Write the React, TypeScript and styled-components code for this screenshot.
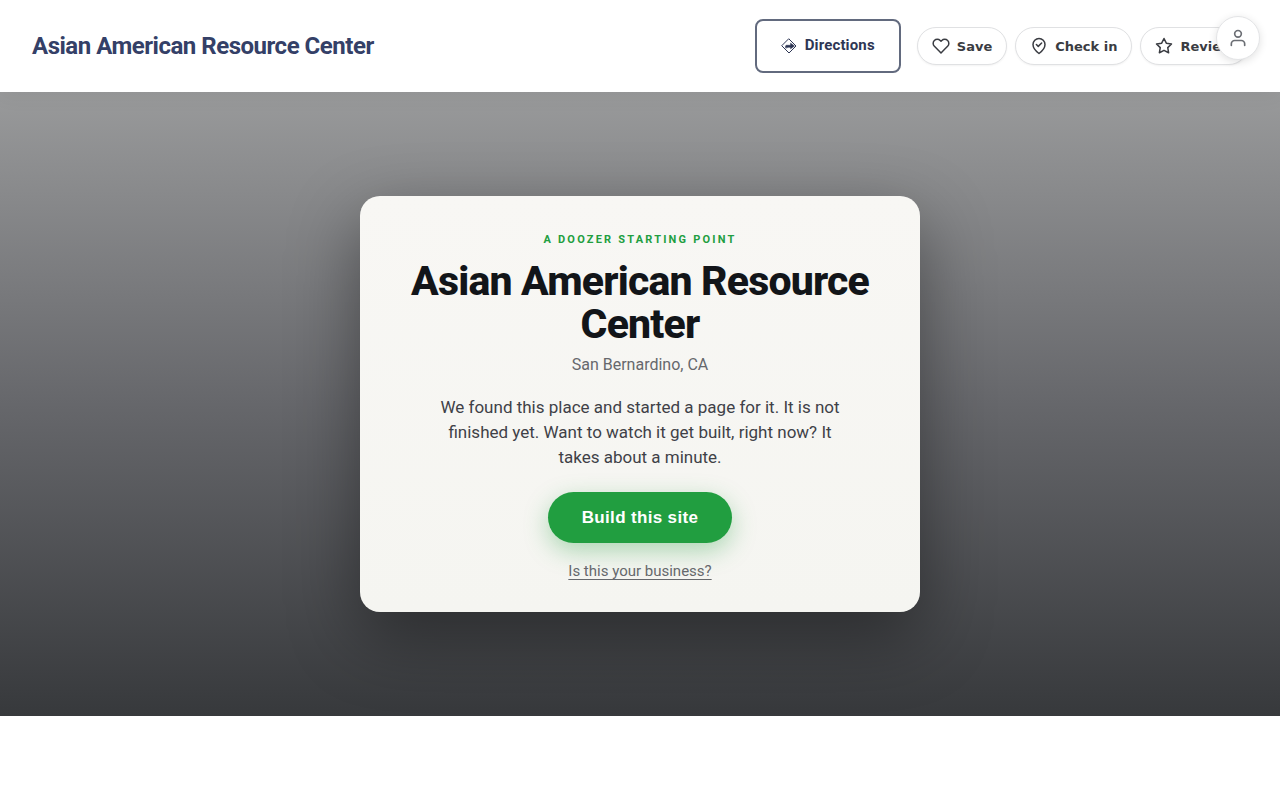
import React from "react";
import styled, { createGlobalStyle } from "styled-components";

const GlobalStyle = createGlobalStyle`
  *, *::before, *::after { box-sizing: border-box; }
  body {
    margin: 0;
    background: #fff;
    color: #3b3d42;
    font-family: Roboto, "Liberation Sans", sans-serif;
  }
`;

const Header = styled.header`
  position: relative;
  z-index: 1;
  display: flex;
  align-items: center;
  justify-content: space-between;
  min-height: 92px;
  padding: 0 32px;
  background: #fff;
  box-shadow: 0 4px 20px rgba(0, 0, 0, 0.05);
`;

const Brand = styled.a`
  color: #344067;
  font-size: 24px;
  font-weight: 700;
  line-height: 32px;
  letter-spacing: -0.02em;
  text-decoration: none;
`;

const Actions = styled.nav`
  display: flex;
  align-items: center;
  gap: 16px;
`;

const DirectionsLink = styled.a`
  display: flex;
  align-items: center;
  gap: 8px;
  height: 54px;
  padding: 0 24px;
  border: 2px solid #626a7e;
  border-radius: 8px;
  color: #2e3654;
  font-size: 15px;
  font-weight: 700;
  line-height: 24px;
  letter-spacing: 0.01em;
  text-decoration: none;
`;

const DirectionsLabel = styled.span`
  padding-bottom: 2px;
`;

const PillGroup = styled.div`
  display: flex;
  gap: 8px;
`;

const Pill = styled.button`
  display: flex;
  align-items: center;
  gap: 7px;
  height: 38px;
  padding: 0 14px;
  border: 1px solid #e0e1e3;
  border-radius: 20px;
  background: #fff;
  box-shadow: 0 1px 2px rgba(0, 0, 0, 0.05);
  color: #3a3c42;
  font-family: "DejaVu Sans", sans-serif;
  font-size: 13px;
  font-weight: 600;
  line-height: 21px;
  white-space: nowrap;
  cursor: pointer;
`;

const AccountButton = styled.button`
  position: fixed;
  top: 16px;
  right: 20px;
  z-index: 2;
  display: flex;
  align-items: center;
  justify-content: center;
  width: 44px;
  height: 44px;
  padding: 0;
  border: 1px solid #e3e4e6;
  border-radius: 50%;
  background: #fff;
  box-shadow: 0 2px 8px rgba(0, 0, 0, 0.12);
  color: #6b6e74;
  cursor: pointer;
`;

const Icon = styled.svg<{ $size: number }>`
  display: block;
  flex: none;
  width: ${(p) => p.$size}px;
  height: ${(p) => p.$size}px;
  fill: none;
  stroke: currentColor;
  stroke-width: 2;
  stroke-linecap: round;
  stroke-linejoin: round;
`;

const Hero = styled.main`
  display: flex;
  align-items: center;
  justify-content: center;
  min-height: 78vh;
  padding: 48px 24px;
  background: linear-gradient(180deg, #999a9b 0%, #66676b 50%, #37393c 100%);
`;

const Card = styled.section`
  display: flex;
  flex-direction: column;
  align-items: center;
  width: 100%;
  max-width: 560px;
  padding: 36px 40px 31px;
  border-radius: 20px;
  background: linear-gradient(180deg, #f8f7f4, #f5f5f1);
  box-shadow: 0 24px 70px rgba(0, 0, 0, 0.4);
  text-align: center;
`;

const Eyebrow = styled.p`
  margin: 0 0 12px;
  color: #219e40;
  font-size: 11px;
  font-weight: 700;
  line-height: 16px;
  letter-spacing: 0.2em;
  text-transform: uppercase;
`;

const Title = styled.h1`
  margin: 0 0 8px;
  color: #121519;
  font-size: 41px;
  font-weight: 800;
  line-height: 43px;
  letter-spacing: -0.02em;
`;

const Place = styled.p`
  margin: 0 0 19px;
  color: #66686c;
  font-size: 16px;
  line-height: 22px;
`;

const Lead = styled.p`
  max-width: 420px;
  margin: 0 0 22px;
  color: #3f4147;
  font-size: 17px;
  line-height: 25px;
`;

const BuildButton = styled.button`
  height: 51px;
  margin: 0 0 18px;
  padding: 0 34px;
  border: 0;
  border-radius: 26px;
  background: #219e40;
  box-shadow: 0 8px 24px rgba(33, 158, 64, 0.35);
  color: #fff;
  font-family: "Liberation Sans", sans-serif;
  font-size: 17px;
  font-weight: 700;
  line-height: 20px;
  letter-spacing: 0.02em;
  cursor: pointer;
`;

const ClaimLink = styled.a`
  color: #66686c;
  font-size: 15px;
  line-height: 20px;
  text-decoration: underline;
  text-underline-offset: 3px;
`;

export default function App() {
  return (
    <>
      <GlobalStyle />
      <Header>
        <Brand href="#">Asian American Resource Center</Brand>
        <Actions aria-label="Place actions">
          <DirectionsLink href="#directions">
            <Icon $size={16} viewBox="0 0 16 16" aria-hidden="true">
              <path strokeWidth="1" d="M8 1L15 8L8 15L1 8z" />
              <path fill="currentColor" strokeWidth="0.6" d="M4.6 9.6V8.2C4.6 7.6 5 7.3 5.6 7.3H9.6V5.2L13.4 8L9.6 10.8V9.2H6.2V9.6z" />
            </Icon>
            <DirectionsLabel>Directions</DirectionsLabel>
          </DirectionsLink>
          <PillGroup>
            <Pill type="button">
              <Icon $size={18} viewBox="0 0 24 24" aria-hidden="true">
                <path d="M20.84 4.61a5.5 5.5 0 0 0-7.78 0L12 5.67l-1.06-1.06a5.5 5.5 0 0 0-7.78 7.78l1.06 1.06L12 21.23l7.78-7.78 1.06-1.06a5.5 5.5 0 0 0 0-7.78z" />
              </Icon>
              Save
            </Pill>
            <Pill type="button">
              <Icon $size={18} viewBox="0 0 24 24" aria-hidden="true">
                <path d="M12 22s8-6 8-12a8 8 0 0 0-16 0c0 6 8 12 8 12z" />
                <path d="M8.5 10l2.5 2.5 4.5-4.5" />
              </Icon>
              Check in
            </Pill>
            <Pill type="button">
              <Icon $size={18} viewBox="0 0 24 24" aria-hidden="true">
                <path d="M12 2l3.09 6.26L22 9.27l-5 4.87 1.18 6.88L12 17.77l-6.18 3.25L7 14.14 2 9.27l6.91-1.01L12 2z" />
              </Icon>
              Review
            </Pill>
          </PillGroup>
        </Actions>
      </Header>
      <AccountButton type="button" aria-label="Account">
        <Icon $size={20} viewBox="0 0 24 24" aria-hidden="true">
          <path d="M20 21v-2a4 4 0 0 0-4-4H8a4 4 0 0 0-4 4v2" />
          <circle cx="12" cy="7" r="4" />
        </Icon>
      </AccountButton>
      <Hero>
        <Card>
          <Eyebrow>A Doozer starting point</Eyebrow>
          <Title>Asian American Resource Center</Title>
          <Place>San Bernardino, CA</Place>
          <Lead>
            We found this place and started a page for it. It is not finished yet. Want to watch it
            get built, right now? It takes about a minute.
          </Lead>
          <BuildButton type="button">Build this site</BuildButton>
          <ClaimLink href="#claim">Is this your business?</ClaimLink>
        </Card>
      </Hero>
    </>
  );
}
